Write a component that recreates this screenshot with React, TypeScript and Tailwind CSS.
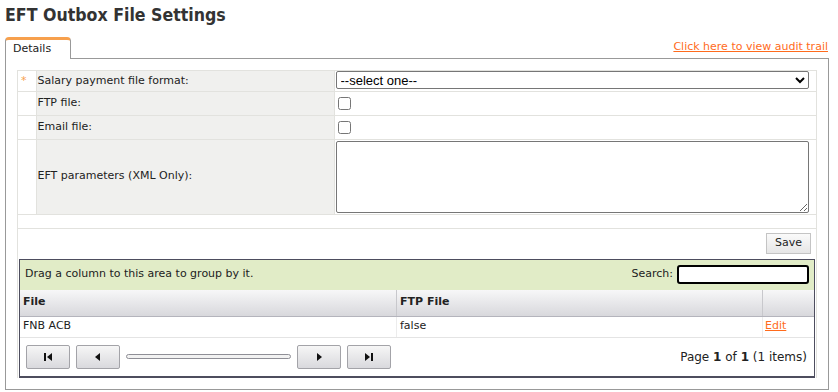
import React from 'react';

const First = () => (
  <svg width="10" height="10" viewBox="0 0 10 10"><rect x="1" y="1" width="2" height="8" fill="#111" /><path d="M9 1 L4 5 L9 9 Z" fill="#111" /></svg>
);
const Prev = () => (
  <svg width="10" height="10" viewBox="0 0 10 10"><path d="M7 1 L2 5 L7 9 Z" fill="#111" /></svg>
);
const Next = () => (
  <svg width="10" height="10" viewBox="0 0 10 10"><path d="M3 1 L8 5 L3 9 Z" fill="#111" /></svg>
);
const Last = () => (
  <svg width="10" height="10" viewBox="0 0 10 10"><path d="M1 1 L6 5 L1 9 Z" fill="#111" /><rect x="7" y="1" width="2" height="8" fill="#111" /></svg>
);

const PagerButton = ({ children }: { children: React.ReactNode }) => (
  <button className="flex h-[24px] w-[44px] items-center justify-center rounded-[2px] border border-[#a3a3a8] bg-gradient-to-b from-[#f6f6f6] to-[#d9d9dd]">
    {children}
  </button>
);

export default function App() {
  return (
    <div className="h-[392px] w-[838px] overflow-hidden bg-white font-['DejaVu_Sans',sans-serif] text-[11px] text-[#222]">
      <h1 className="pl-[5px] pt-[4px] text-[17.6px] font-bold leading-[22px] text-[#333] [font-stretch:condensed]">EFT Outbox File Settings</h1>

      <div className="mt-[11px] flex items-end justify-between pl-[5px] pr-[10px]">
        <div className="relative -mb-px h-[22px] w-[66px] rounded-t-[4px] border border-b-0 border-[#999] border-t-[3px] border-t-[#f7a04d] bg-white pl-[7px] pt-[1px] text-[11px] text-[#222]">
          Details
        </div>
        <a href="#" className="mb-[3px] text-[11px] text-[#ff6b1c] underline">Click here to view audit trail</a>
      </div>

      <div className="ml-[5px] h-[332px] w-[824px] border border-[#999] bg-white pl-[11px] pt-[11px]">
        <div className="w-[800px] border-x border-t border-[#e2e2de]">
          <table className="w-full border-collapse">
            <tbody>
              <tr className="h-[20px] border-b border-[#e2e2de]">
                <td className="w-[18px] border-r border-[#e2e2de] pl-[3px] align-middle text-[#f7a04d]">*</td>
                <td className="w-[298px] border-r border-[#e2e2de] bg-[#f0f0ee] pl-[1px]">Salary payment file format:</td>
                <td className="pl-[1px] pr-[7px]">
                  <select className="h-[18px] w-full rounded-[2px] border border-[#767676] bg-white font-['Liberation_Sans',sans-serif] text-[13px] text-black">
                    <option>--select one--</option>
                  </select>
                </td>
              </tr>
              <tr className="h-[24px] border-b border-[#e2e2de]">
                <td className="border-r border-[#e2e2de]"></td>
                <td className="border-r border-[#e2e2de] bg-[#f0f0ee] pl-[1px]">FTP file:</td>
                <td className="pl-[3px]"><input type="checkbox" className="block h-[13px] w-[13px]" /></td>
              </tr>
              <tr className="h-[24px] border-b border-[#e2e2de]">
                <td className="border-r border-[#e2e2de]"></td>
                <td className="border-r border-[#e2e2de] bg-[#f0f0ee] pl-[1px]">Email file:</td>
                <td className="pl-[3px]"><input type="checkbox" className="block h-[13px] w-[13px]" /></td>
              </tr>
              <tr className="h-[75px] border-b border-[#e2e2de]">
                <td className="border-r border-[#e2e2de]"></td>
                <td className="border-r border-[#e2e2de] bg-[#f0f0ee] pl-[1px]">EFT parameters (XML Only):</td>
                <td className="pl-[1px] pr-[7px]">
                  <textarea className="block h-[72px] w-full rounded-[2px] border border-[#767676] bg-white"></textarea>
                </td>
              </tr>
              <tr className="h-[14px] border-b border-[#e2e2de]">
                <td colSpan={3}></td>
              </tr>
            </tbody>
          </table>

          <div className="flex h-[30px] items-center justify-end pr-[5px]">
            <button className="h-[21px] w-[45px] border border-[#c4c4c4] bg-gradient-to-b from-[#fafafa] to-[#e6e6e6] text-[11px] text-[#222]">Save</button>
          </div>

          <div className="mx-px border border-[#4d4d5e] border-b-2">
            <div className="flex h-[30px] items-center justify-between bg-[#e1ecc7] pl-[5px] pr-[5px]">
              <span>Drag a column to this area to group by it.</span>
              <div className="flex items-center gap-[4px]">
                <span>Search:</span>
                <input className="h-[19px] w-[132px] rounded-[3px] border-2 border-black bg-white" />
              </div>
            </div>
            <div className="flex h-[27px] border-b border-[#b4b4bc] bg-gradient-to-b from-[#f7f7f8] to-[#d8d8dc] font-bold">
              <div className="flex w-[377px] items-center border-r border-[#c8c8cc] pl-[3px]">File</div>
              <div className="flex w-[366px] items-center border-r border-[#c8c8cc] pl-[3px]">FTP File</div>
              <div className="flex-1"></div>
            </div>
            <div className="flex h-[21px] border-b border-[#e4e4e4]">
              <div className="flex w-[377px] items-center border-r border-[#ececec] pl-[3px]">FNB ACB</div>
              <div className="flex w-[366px] items-center border-r border-[#ececec] pl-[3px]">false</div>
              <div className="flex flex-1 items-center pl-[2px]"><a href="#" className="text-[#ff6b1c] underline">Edit</a></div>
            </div>
            <div className="flex h-[38px] items-center justify-between pl-[6px] pr-[7px]">
              <div className="flex items-center gap-[6px]">
                <PagerButton><First /></PagerButton>
                <PagerButton><Prev /></PagerButton>
                <div className="h-[5px] w-[165px] rounded-full border border-[#8f8f96] bg-[#f2f2f2]"></div>
                <PagerButton><Next /></PagerButton>
                <PagerButton><Last /></PagerButton>
              </div>
              <span className="text-[12px]">Page <b>1</b> of <b>1</b> (1 items)</span>
            </div>
          </div>
        </div>
      </div>
    </div>
  );
}
